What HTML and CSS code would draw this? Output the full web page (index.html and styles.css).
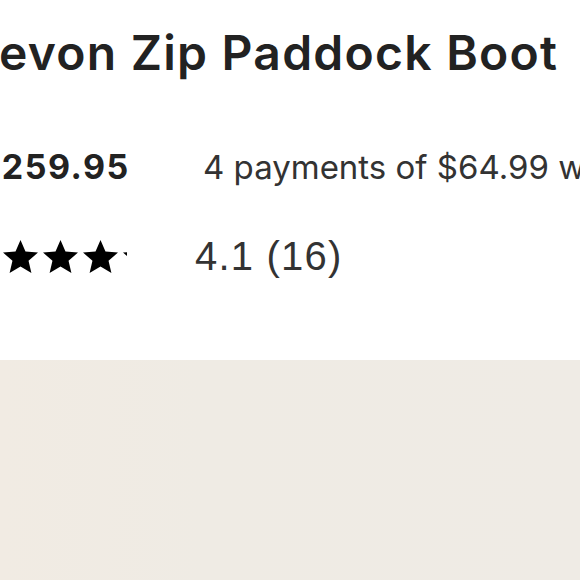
FILE: index.html
```html
<!DOCTYPE html>
<html lang="en">
<head>
<meta charset="utf-8">
<title>Devon Zip Paddock Boot</title>
<link rel="stylesheet" href="styles.css">
</head>
<body>
<main class="page">
  <section class="product">
    <h1 class="title">Devon Zip Paddock Boot</h1>
    <div class="price-row">
      <span class="price">$259.95</span>
      <span class="installments">4 payments of $64.99 with Afterpay</span>
    </div>
    <div class="rating-row">
      <div class="stars" aria-label="4.1 out of 5 stars">
        <svg class="star" viewBox="1.1 1.5 21.8 20.5"><path d="M12 1.5l3.1 7.2 7.8.6-5.9 5.1 1.8 7.6L12 18l-6.8 4 1.8-7.6-5.9-5.1 7.8-.6z"/></svg>
        <svg class="star" viewBox="1.1 1.5 21.8 20.5"><path d="M12 1.5l3.1 7.2 7.8.6-5.9 5.1 1.8 7.6L12 18l-6.8 4 1.8-7.6-5.9-5.1 7.8-.6z"/></svg>
        <svg class="star" viewBox="1.1 1.5 21.8 20.5"><path d="M12 1.5l3.1 7.2 7.8.6-5.9 5.1 1.8 7.6L12 18l-6.8 4 1.8-7.6-5.9-5.1 7.8-.6z"/></svg>
        <svg class="star" viewBox="1.1 1.5 21.8 20.5"><path d="M12 1.5l3.1 7.2 7.8.6-5.9 5.1 1.8 7.6L12 18l-6.8 4 1.8-7.6-5.9-5.1 7.8-.6z"/></svg>
        <span class="star-partial"><svg class="star" viewBox="1.1 1.5 21.8 20.5"><path d="M12 1.5l3.1 7.2 7.8.6-5.9 5.1 1.8 7.6L12 18l-6.8 4 1.8-7.6-5.9-5.1 7.8-.6z"/></svg></span>
      </div>
      <span class="rating-value">4.1 (16)</span>
    </div>
  </section>
  <div class="hero"></div>
</main>
</body>
</html>
```

FILE: styles.css
```css
html, body {
  margin: 0;
  padding: 0;
  background: #ffffff;
  overflow: hidden;
}

.page {
  width: 580px;
  height: 580px;
  display: flex;
  flex-direction: column;
  overflow: hidden;
}

.product {
  margin-left: -37px;
  padding-top: 23px;
  display: flex;
  flex-direction: column;
  white-space: nowrap;
}

.title {
  margin: 0;
  font-family: Inter, "Liberation Sans", sans-serif;
  font-weight: 600;
  font-size: 48px;
  line-height: 60px;
  color: #222222;
  letter-spacing: 1.25px;
}

.price-row {
  display: flex;
  align-items: baseline;
  margin-top: 64px;
}

.price {
  flex: none;
  width: 225px;
  margin-left: 15px;
  font-family: Inter, "Liberation Sans", sans-serif;
  font-weight: 700;
  font-size: 34px;
  line-height: 40px;
  letter-spacing: 1.5px;
  color: #222222;
}

.installments {
  font-family: Inter, "Liberation Sans", sans-serif;
  font-weight: 400;
  font-size: 33px;
  line-height: 40px;
  color: #333333;
}

.rating-row {
  display: flex;
  align-items: center;
  margin-top: 47px;
}

.stars {
  display: flex;
  gap: 5px;
  width: 200px;
  flex: none;
}

.star {
  width: 35px;
  height: 33px;
  fill: #000000;
  display: block;
  flex: none;
}

.star-partial {
  width: 4px;
  overflow: hidden;
  display: block;
}

.rating-value {
  font-family: "Liberation Sans", Arial, sans-serif;
  font-size: 40px;
  line-height: 44px;
  letter-spacing: 1.2px;
  color: #333333;
  margin-left: 32px;
}

.hero {
  margin-top: 82px;
  flex: 1;
  background: linear-gradient(90deg, #f1ebe3 0%, #efebe4 35%, #efebe5 100%);
}
```
